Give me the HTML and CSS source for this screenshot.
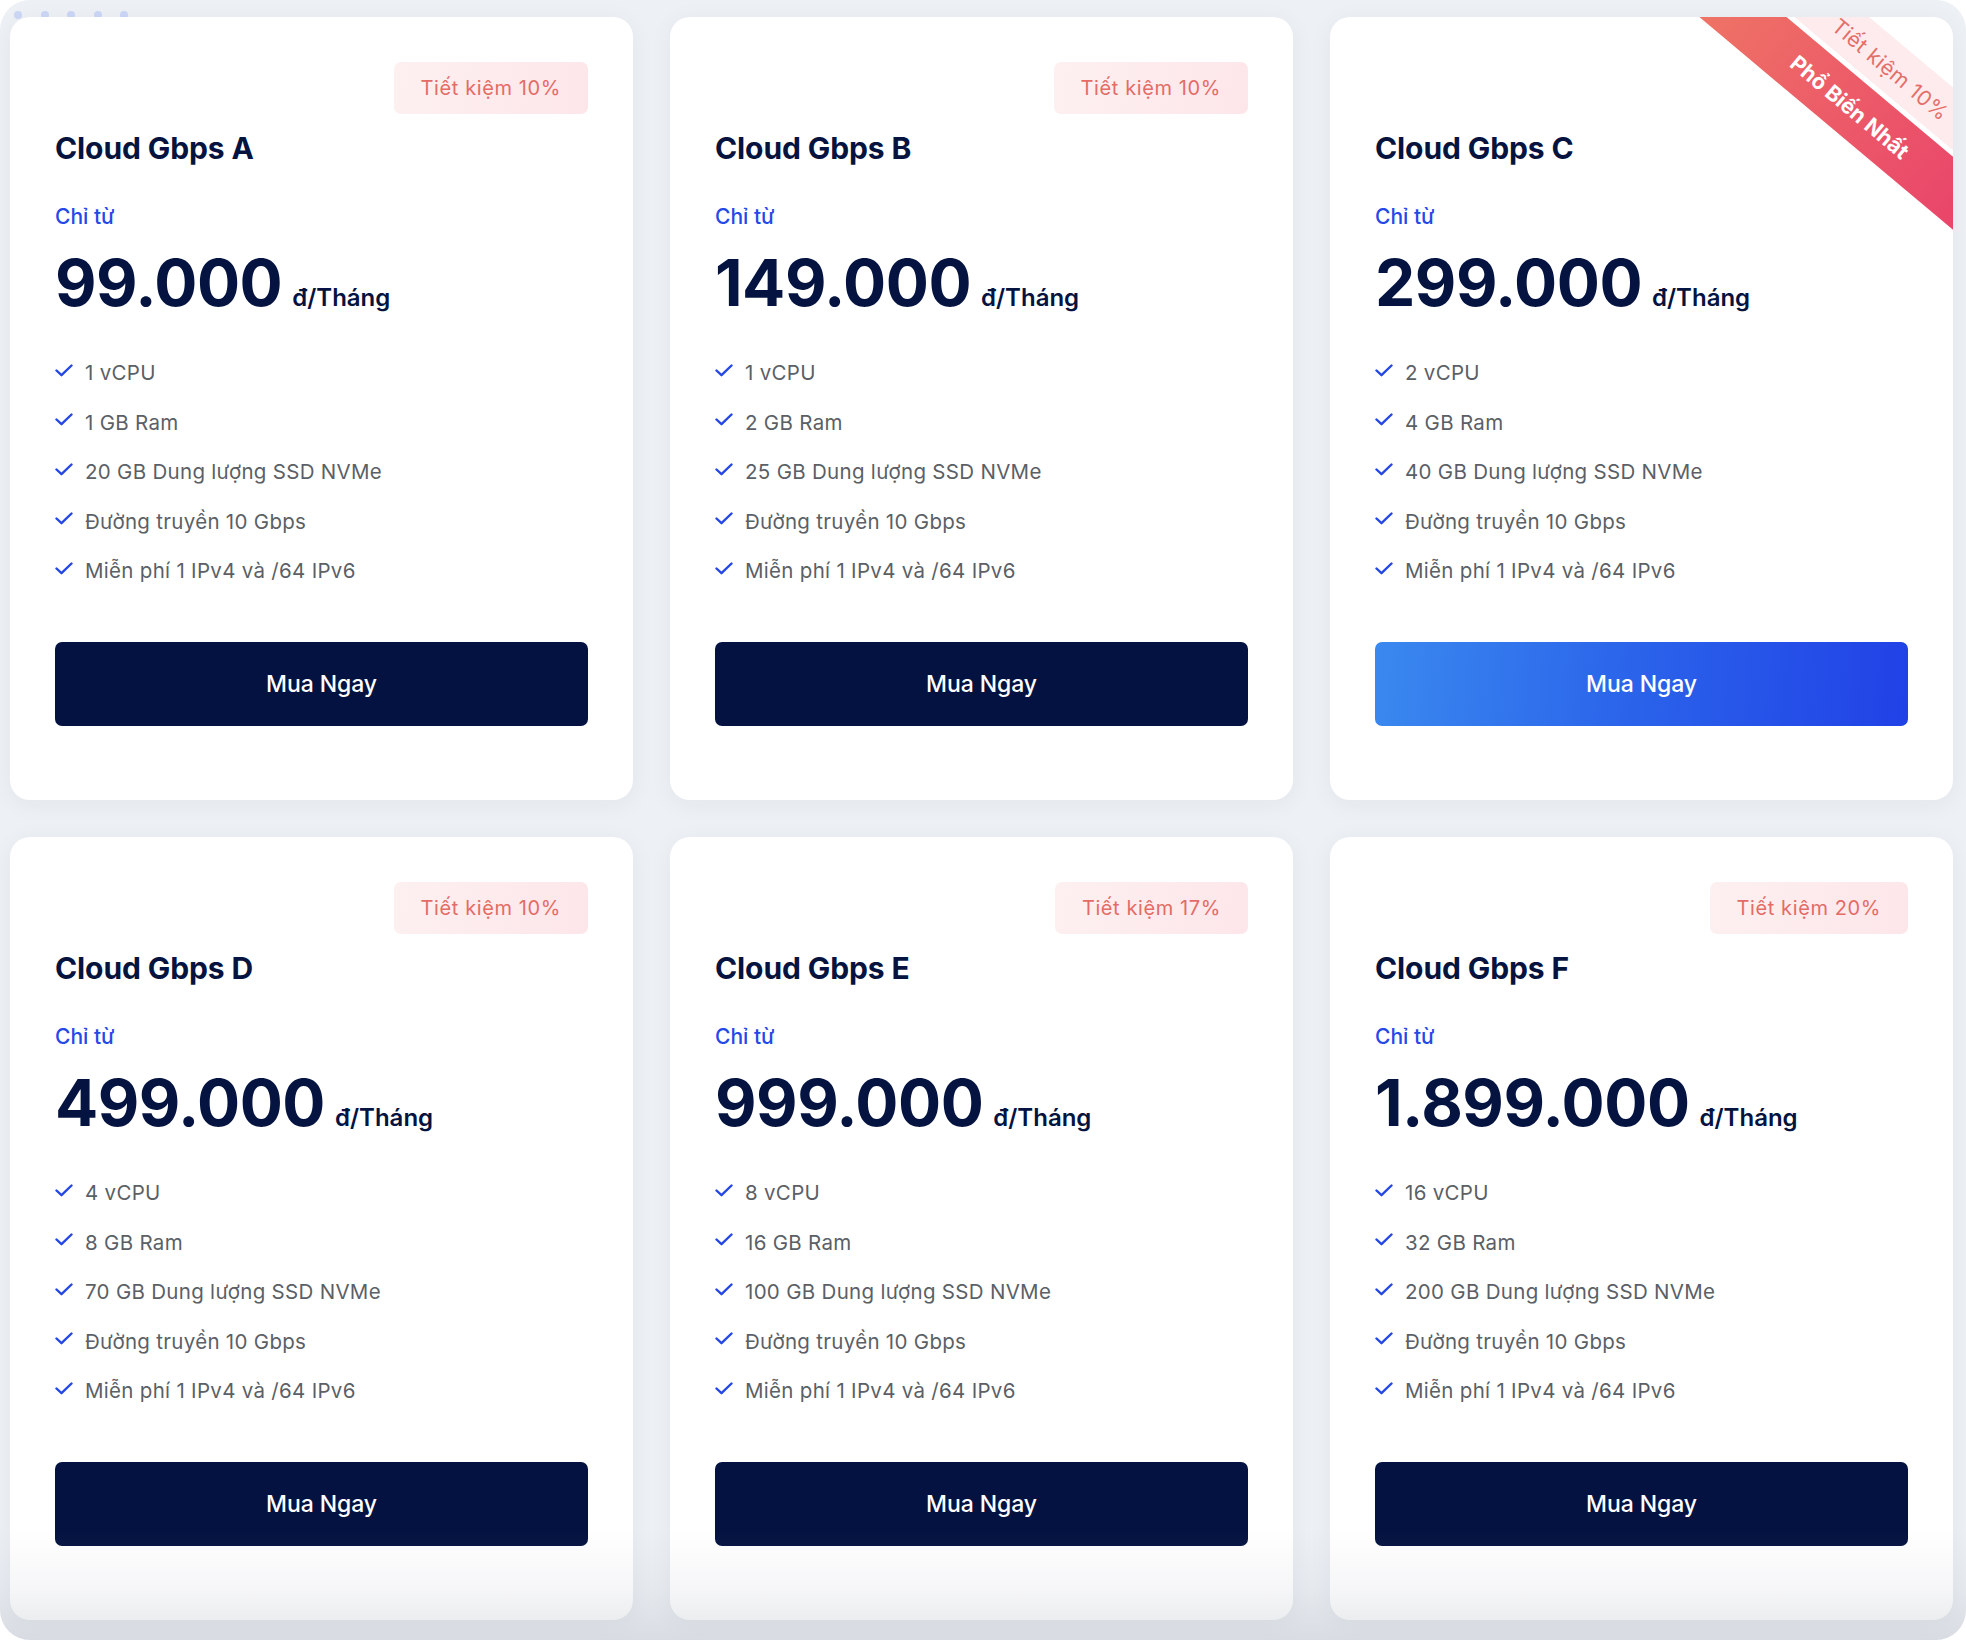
FILE: index.html
```html
<!DOCTYPE html>
<html lang="vi">
<head>
<meta charset="utf-8">
<title>Cloud Gbps</title>
<link rel="stylesheet" href="styles.css">
</head>
<body>
<div class="frame">
  <div class="dots"><span></span><span></span><span></span><span></span><span></span></div>
  <div class="grid">

    <div class="card">
      <div class="badge-row"><span class="badge">Tiết kiệm 10%</span></div>
      <h3 class="title">Cloud Gbps A</h3>
      <div class="from">Chỉ từ</div>
      <div class="price-row"><span class="price">99.000</span><span class="unit">đ/Tháng</span></div>
      <ul class="features">
        <li><svg class="check" viewBox="0 0 18 13"><path d="M1.5 6.5 L6.5 11.2 L16.5 1.5"/></svg>1 vCPU</li>
        <li><svg class="check" viewBox="0 0 18 13"><path d="M1.5 6.5 L6.5 11.2 L16.5 1.5"/></svg>1 GB Ram</li>
        <li><svg class="check" viewBox="0 0 18 13"><path d="M1.5 6.5 L6.5 11.2 L16.5 1.5"/></svg>20 GB Dung lượng SSD NVMe</li>
        <li><svg class="check" viewBox="0 0 18 13"><path d="M1.5 6.5 L6.5 11.2 L16.5 1.5"/></svg>Đường truyền 10 Gbps</li>
        <li><svg class="check" viewBox="0 0 18 13"><path d="M1.5 6.5 L6.5 11.2 L16.5 1.5"/></svg>Miễn phí 1 IPv4 và /64 IPv6</li>
      </ul>
      <a class="btn" href="#">Mua Ngay</a>
    </div>

    <div class="card">
      <div class="badge-row"><span class="badge">Tiết kiệm 10%</span></div>
      <h3 class="title">Cloud Gbps B</h3>
      <div class="from">Chỉ từ</div>
      <div class="price-row"><span class="price">149.000</span><span class="unit">đ/Tháng</span></div>
      <ul class="features">
        <li><svg class="check" viewBox="0 0 18 13"><path d="M1.5 6.5 L6.5 11.2 L16.5 1.5"/></svg>1 vCPU</li>
        <li><svg class="check" viewBox="0 0 18 13"><path d="M1.5 6.5 L6.5 11.2 L16.5 1.5"/></svg>2 GB Ram</li>
        <li><svg class="check" viewBox="0 0 18 13"><path d="M1.5 6.5 L6.5 11.2 L16.5 1.5"/></svg>25 GB Dung lượng SSD NVMe</li>
        <li><svg class="check" viewBox="0 0 18 13"><path d="M1.5 6.5 L6.5 11.2 L16.5 1.5"/></svg>Đường truyền 10 Gbps</li>
        <li><svg class="check" viewBox="0 0 18 13"><path d="M1.5 6.5 L6.5 11.2 L16.5 1.5"/></svg>Miễn phí 1 IPv4 và /64 IPv6</li>
      </ul>
      <a class="btn" href="#">Mua Ngay</a>
    </div>

    <div class="card">
      <div class="ribbon">
        <div class="ribbon-save">Tiết kiệm 10%</div>
        <div class="ribbon-hot">Phổ Biến Nhất</div>
      </div>
      <div class="badge-row"></div>
      <h3 class="title">Cloud Gbps C</h3>
      <div class="from">Chỉ từ</div>
      <div class="price-row"><span class="price">299.000</span><span class="unit">đ/Tháng</span></div>
      <ul class="features">
        <li><svg class="check" viewBox="0 0 18 13"><path d="M1.5 6.5 L6.5 11.2 L16.5 1.5"/></svg>2 vCPU</li>
        <li><svg class="check" viewBox="0 0 18 13"><path d="M1.5 6.5 L6.5 11.2 L16.5 1.5"/></svg>4 GB Ram</li>
        <li><svg class="check" viewBox="0 0 18 13"><path d="M1.5 6.5 L6.5 11.2 L16.5 1.5"/></svg>40 GB Dung lượng SSD NVMe</li>
        <li><svg class="check" viewBox="0 0 18 13"><path d="M1.5 6.5 L6.5 11.2 L16.5 1.5"/></svg>Đường truyền 10 Gbps</li>
        <li><svg class="check" viewBox="0 0 18 13"><path d="M1.5 6.5 L6.5 11.2 L16.5 1.5"/></svg>Miễn phí 1 IPv4 và /64 IPv6</li>
      </ul>
      <a class="btn btn-featured" href="#">Mua Ngay</a>
    </div>

    <div class="card">
      <div class="badge-row"><span class="badge">Tiết kiệm 10%</span></div>
      <h3 class="title">Cloud Gbps D</h3>
      <div class="from">Chỉ từ</div>
      <div class="price-row"><span class="price">499.000</span><span class="unit">đ/Tháng</span></div>
      <ul class="features">
        <li><svg class="check" viewBox="0 0 18 13"><path d="M1.5 6.5 L6.5 11.2 L16.5 1.5"/></svg>4 vCPU</li>
        <li><svg class="check" viewBox="0 0 18 13"><path d="M1.5 6.5 L6.5 11.2 L16.5 1.5"/></svg>8 GB Ram</li>
        <li><svg class="check" viewBox="0 0 18 13"><path d="M1.5 6.5 L6.5 11.2 L16.5 1.5"/></svg>70 GB Dung lượng SSD NVMe</li>
        <li><svg class="check" viewBox="0 0 18 13"><path d="M1.5 6.5 L6.5 11.2 L16.5 1.5"/></svg>Đường truyền 10 Gbps</li>
        <li><svg class="check" viewBox="0 0 18 13"><path d="M1.5 6.5 L6.5 11.2 L16.5 1.5"/></svg>Miễn phí 1 IPv4 và /64 IPv6</li>
      </ul>
      <a class="btn" href="#">Mua Ngay</a>
    </div>

    <div class="card">
      <div class="badge-row"><span class="badge">Tiết kiệm 17%</span></div>
      <h3 class="title">Cloud Gbps E</h3>
      <div class="from">Chỉ từ</div>
      <div class="price-row"><span class="price">999.000</span><span class="unit">đ/Tháng</span></div>
      <ul class="features">
        <li><svg class="check" viewBox="0 0 18 13"><path d="M1.5 6.5 L6.5 11.2 L16.5 1.5"/></svg>8 vCPU</li>
        <li><svg class="check" viewBox="0 0 18 13"><path d="M1.5 6.5 L6.5 11.2 L16.5 1.5"/></svg>16 GB Ram</li>
        <li><svg class="check" viewBox="0 0 18 13"><path d="M1.5 6.5 L6.5 11.2 L16.5 1.5"/></svg>100 GB Dung lượng SSD NVMe</li>
        <li><svg class="check" viewBox="0 0 18 13"><path d="M1.5 6.5 L6.5 11.2 L16.5 1.5"/></svg>Đường truyền 10 Gbps</li>
        <li><svg class="check" viewBox="0 0 18 13"><path d="M1.5 6.5 L6.5 11.2 L16.5 1.5"/></svg>Miễn phí 1 IPv4 và /64 IPv6</li>
      </ul>
      <a class="btn" href="#">Mua Ngay</a>
    </div>

    <div class="card">
      <div class="badge-row"><span class="badge">Tiết kiệm 20%</span></div>
      <h3 class="title">Cloud Gbps F</h3>
      <div class="from">Chỉ từ</div>
      <div class="price-row"><span class="price">1.899.000</span><span class="unit">đ/Tháng</span></div>
      <ul class="features">
        <li><svg class="check" viewBox="0 0 18 13"><path d="M1.5 6.5 L6.5 11.2 L16.5 1.5"/></svg>16 vCPU</li>
        <li><svg class="check" viewBox="0 0 18 13"><path d="M1.5 6.5 L6.5 11.2 L16.5 1.5"/></svg>32 GB Ram</li>
        <li><svg class="check" viewBox="0 0 18 13"><path d="M1.5 6.5 L6.5 11.2 L16.5 1.5"/></svg>200 GB Dung lượng SSD NVMe</li>
        <li><svg class="check" viewBox="0 0 18 13"><path d="M1.5 6.5 L6.5 11.2 L16.5 1.5"/></svg>Đường truyền 10 Gbps</li>
        <li><svg class="check" viewBox="0 0 18 13"><path d="M1.5 6.5 L6.5 11.2 L16.5 1.5"/></svg>Miễn phí 1 IPv4 và /64 IPv6</li>
      </ul>
      <a class="btn" href="#">Mua Ngay</a>
    </div>

  </div>
  <div class="fade"></div>
</div>
</body>
</html>
```

FILE: styles.css
```css
* { box-sizing: border-box; }

html, body {
  margin: 0;
  padding: 0;
  background: #ffffff;
}

body {
  font-family: Inter, "Noto Sans", "Liberation Sans", sans-serif;
  color: #06133f;
}

.frame {
  position: relative;
  width: 1966px;
  height: 1640px;
  background: #edf0f4;
  border-radius: 30px;
  overflow: hidden;
  padding: 17px 13px 21px 10px;
}

.dots {
  position: absolute;
  left: 14px;
  top: 11px;
  display: flex;
  gap: 18.5px;
  z-index: 0;
}

.dots span {
  width: 8px;
  height: 8px;
  border-radius: 50%;
  background: #ccd6f5;
}

.grid {
  position: relative;
  z-index: 1;
  display: grid;
  grid-template-columns: repeat(3, 1fr);
  grid-auto-rows: 783px;
  column-gap: 37px;
  row-gap: 37px;
}

.card {
  position: relative;
  overflow: hidden;
  background: #ffffff;
  border-radius: 20px;
  padding: 45px 45px 74px 45px;
  display: flex;
  flex-direction: column;
  box-shadow: 0 4px 24px rgba(40, 55, 90, 0.05);
}

.badge-row {
  height: 52px;
  display: flex;
  justify-content: flex-end;
}

.badge {
  display: inline-flex;
  align-items: center;
  height: 52px;
  padding: 0 27px;
  border-radius: 7px;
  background: linear-gradient(100deg, #fdf0f0 0%, #fde6ea 100%);
  color: #e36c66;
  font-size: 20px;
  font-weight: 400;
  letter-spacing: 0.6px;
  white-space: nowrap;
}

.title {
  margin: 16px 0 0 0;
  font-size: 30px;
  line-height: 36px;
  font-weight: 700;
  color: #06133f;
  letter-spacing: -0.1px;
}

.from {
  margin-top: 39px;
  font-size: 21px;
  line-height: 24px;
  font-weight: 500;
  color: #2449e8;
}

.price-row {
  margin-top: 22px;
  display: flex;
  align-items: baseline;
  gap: 10px;
  height: 62px;
}

.price {
  font-size: 64px;
  line-height: 64px;
  font-weight: 700;
  color: #04133f;
  letter-spacing: -0.5px;
}

.unit {
  font-size: 24px;
  font-weight: 600;
  color: #04133f;
}

.features {
  list-style: none;
  margin: 45px 0 0 0;
  padding: 0;
  display: flex;
  flex-direction: column;
  gap: 19.5px;
}

.features li {
  display: flex;
  align-items: center;
  height: 30px;
  font-size: 20.5px;
  line-height: 30px;
  letter-spacing: 0.3px;
  color: #5b5f66;
  white-space: nowrap;
}

.check {
  width: 18px;
  height: 13px;
  margin-right: 12px;
  margin-top: -6px;
  flex: none;
}

.check path {
  fill: none;
  stroke: #2447e6;
  stroke-width: 2.4;
  stroke-linecap: round;
  stroke-linejoin: round;
}

.btn {
  margin-top: 56px;
  height: 84px;
  display: flex;
  align-items: center;
  justify-content: center;
  border-radius: 7px;
  background: #031240;
  color: #ffffff;
  font-size: 23px;
  font-weight: 500;
  text-decoration: none;
  letter-spacing: -0.1px;
}

.btn-featured {
  background: linear-gradient(95deg, #3a89ef 0%, #2a62ea 50%, #2141e6 100%);
}

.ribbon {
  position: absolute;
  left: 337px;
  top: 15px;
  width: 400px;
  height: 109px;
  transform: rotate(40deg);
  display: flex;
  flex-direction: column;
  gap: 5px;
  z-index: 2;
}

.ribbon-save {
  height: 48px;
  background: #fdebed;
  color: #e36f6a;
  font-size: 21px;
  font-weight: 400;
  letter-spacing: 0.4px;
  display: flex;
  align-items: center;
  justify-content: center;
  padding-left: 14px;
  padding-top: 5px;
  white-space: nowrap;
}

.ribbon-hot {
  height: 56px;
  background: linear-gradient(90deg, #ef7765 0%, #ec5a68 50%, #e83f6b 100%);
  color: #ffffff;
  font-size: 21.5px;
  font-weight: 700;
  display: flex;
  align-items: center;
  justify-content: center;
  white-space: nowrap;
}

.fade {
  position: absolute;
  left: 0;
  right: 0;
  bottom: 0;
  height: 110px;
  background: linear-gradient(to bottom, rgba(175, 180, 190, 0) 0%, rgba(175, 180, 190, 0.12) 55%, rgba(170, 175, 186, 0.3) 100%);
  pointer-events: none;
  z-index: 3;
}
```
